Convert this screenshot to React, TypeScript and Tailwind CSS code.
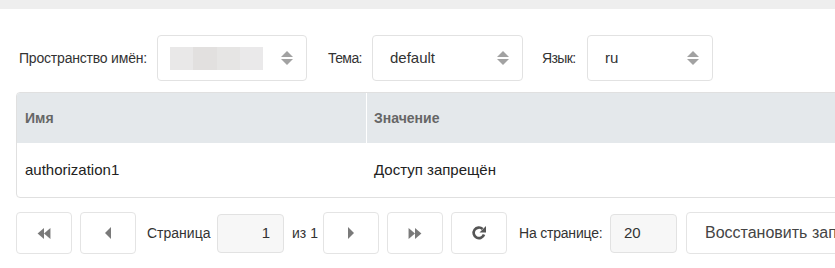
import type { ReactNode } from "react";

function IconUpDown({ className }: { className?: string }) {
  return (
    <svg className={className} viewBox="0 0 12 14" fill="currentColor" aria-hidden>
      <path d="M6 0 12 6H0Z" />
      <path d="M0 8h12L6 14Z" />
    </svg>
  );
}

function IconBackward({ className }: { className?: string }) {
  return (
    <svg className={className} viewBox="0 0 16 12" fill="currentColor" aria-hidden>
      <path d="M8 0v12L1 6Z" />
      <path d="M15 0v12L8 6Z" />
    </svg>
  );
}

function IconForward({ className }: { className?: string }) {
  return (
    <svg className={className} viewBox="0 0 16 12" fill="currentColor" aria-hidden>
      <path d="M1 0v12l7-6Z" />
      <path d="M8 0v12l7-6Z" />
    </svg>
  );
}

function IconCaretLeft({ className }: { className?: string }) {
  return (
    <svg className={className} viewBox="0 0 6 12" fill="currentColor" aria-hidden>
      <path d="M6 0v12L0 6Z" />
    </svg>
  );
}

function IconCaretRight({ className }: { className?: string }) {
  return (
    <svg className={className} viewBox="0 0 6 12" fill="currentColor" aria-hidden>
      <path d="M0 0v12l6-6Z" />
    </svg>
  );
}

function IconRefresh({ className }: { className?: string }) {
  return (
    <svg className={className} viewBox="0 0 16 16" fill="none" aria-hidden>
      <path d="M13 9.5A5.3 5.3 0 1 1 11.6 4" stroke="currentColor" strokeWidth="2.6" />
      <path d="M15 1v6.5H8.5Z" fill="currentColor" />
    </svg>
  );
}

function SelectBox({ width, children }: { width: string; children?: ReactNode }) {
  return (
    <div
      className={`flex h-[46px] ${width} shrink-0 items-center justify-between rounded-[4px] border border-[#e2e2e2] bg-white pl-[17px] pr-[13px] text-[15px] text-[#333]`}
    >
      <span>{children}</span>
      <IconUpDown className="h-[14px] w-[12px] text-[#a2a2a2]" />
    </div>
  );
}

function PagerButton({ children }: { children: ReactNode }) {
  return (
    <button
      type="button"
      className="flex h-[42px] w-[56px] shrink-0 items-center justify-center rounded-[4px] border border-[#e4e4e4] bg-white"
    >
      {children}
    </button>
  );
}

export default function App() {
  return (
    <div className="h-[268px] w-[835px] overflow-hidden bg-white font-['Liberation_Sans',Arial,sans-serif] text-[14px] text-[#333]">
      <div className="h-[9px] bg-[#eeeeee]" />

      <div className="flex items-center pl-[19px] pt-[26px]">
        <span className="w-[138px] shrink-0 whitespace-nowrap tracking-[-0.2px]">Пространство имён:</span>
        <SelectBox width="w-[150px]">
          <span className="-ml-[5px] flex h-[23px] w-[93px]">
            <span className="flex-1 bg-[#e9e8e8]" />
            <span className="flex-1 bg-[#e2e0df]" />
            <span className="flex-1 bg-[#e6e5e4]" />
            <span className="flex-1 bg-[#eae9ea]" />
          </span>
        </SelectBox>
        <span className="ml-[21px] w-[44px] shrink-0 tracking-[-0.6px]">Тема:</span>
        <SelectBox width="w-[151px]">default</SelectBox>
        <span className="ml-[19px] w-[45px] shrink-0 tracking-[-0.6px]">Язык:</span>
        <SelectBox width="w-[126px]">ru</SelectBox>
      </div>

      <div className="ml-[16px] mt-[11px] w-[840px] overflow-hidden rounded-[4px] border border-[#e0e0e0]">
        <div className="flex h-[50px] items-center bg-[#e4e8eb] font-bold text-[#666]">
          <div className="flex h-full w-[350px] items-center border-r border-white pl-[8px]">Имя</div>
          <div className="pl-[7px]">Значение</div>
        </div>
        <div className="flex h-[54px] items-center text-[15px] text-[#222]">
          <div className="w-[350px] pl-[8px]">authorization1</div>
          <div className="pl-[7px]">Доступ запрещён</div>
        </div>
      </div>

      <div className="ml-[16px] mt-[14px] flex w-[900px] items-center">
        <PagerButton>
          <IconBackward className="h-[11px] w-[16px] text-[#7a7a7a]" />
        </PagerButton>
        <div className="ml-[8px]">
          <PagerButton>
            <IconCaretLeft className="h-[12px] w-[6px] text-[#7a7a7a]" />
          </PagerButton>
        </div>
        <span className="ml-[11px] w-[70px] shrink-0">Страница</span>
        <div className="flex h-[39px] w-[67px] shrink-0 items-center justify-end rounded-[4px] border border-[#e2e2e2] bg-[#f7f7f7] pr-[13px] text-[15px]">
          1
        </div>
        <span className="ml-[8px] w-[31px] shrink-0">из 1</span>
        <PagerButton>
          <IconCaretRight className="h-[12px] w-[6px] text-[#7a7a7a]" />
        </PagerButton>
        <div className="ml-[8px]">
          <PagerButton>
            <IconForward className="h-[11px] w-[16px] text-[#7a7a7a]" />
          </PagerButton>
        </div>
        <div className="ml-[8px]">
          <PagerButton>
            <IconRefresh className="h-[16px] w-[16px] text-[#555]" />
          </PagerButton>
        </div>
        <span className="ml-[12px] w-[91px] shrink-0 whitespace-nowrap tracking-[-0.2px]">На странице:</span>
        <div className="flex h-[39px] w-[67px] shrink-0 items-center rounded-[4px] border border-[#e2e2e2] bg-[#f7f7f7] pl-[13px] text-[15px]">
          20
        </div>
        <button
          type="button"
          className="ml-[9px] flex h-[42px] w-[200px] shrink-0 items-center rounded-[4px] border border-[#e4e4e4] bg-white pl-[18px] text-[16px] text-[#444]"
        >
          Восстановить записи
        </button>
      </div>
    </div>
  );
}
